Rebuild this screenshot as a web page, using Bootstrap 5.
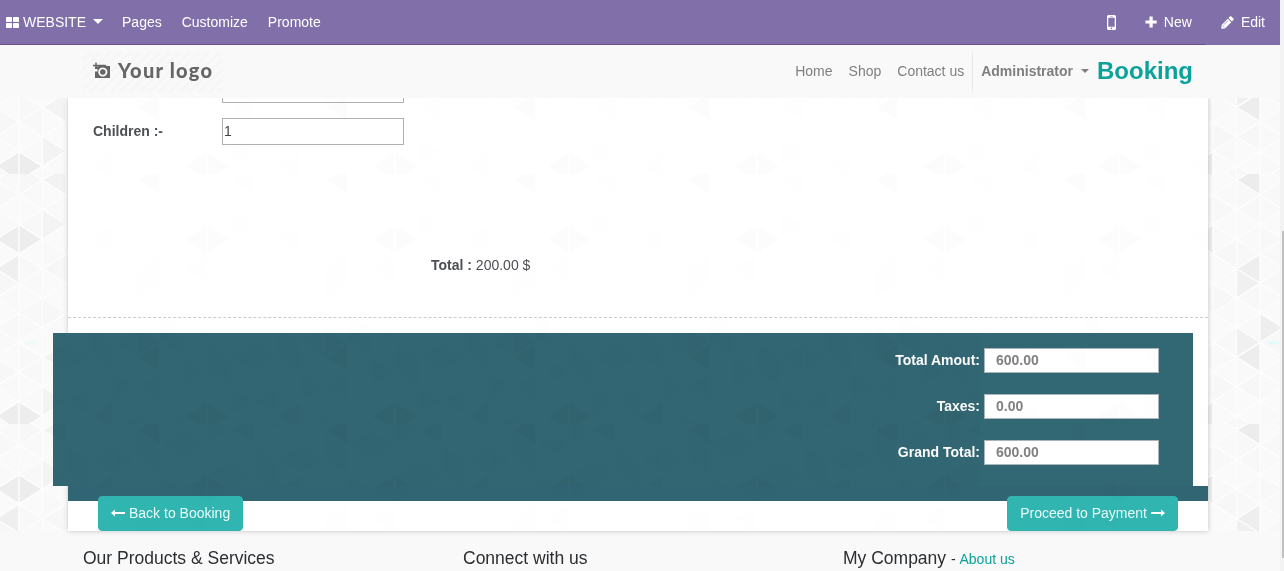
<!DOCTYPE html>
<html lang="en">
<head>
<meta charset="utf-8">
<meta name="viewport" content="width=device-width, initial-scale=1">
<title>Booking</title>
<link rel="stylesheet" href="https://cdn.jsdelivr.net/npm/bootstrap@5.3.0/dist/css/bootstrap.min.css">
<style>
html, body { height: 100%; overflow: hidden; }
body { font-family: "Liberation Sans", Arial, sans-serif; font-size: 14px; line-height: 21px; color: #4c4f53; background: #f9f9f9; }
a { text-decoration: none; color: inherit; }
svg { display: block; }
.page { width: 1280px; height: 571px; }
.scroll-track { width: 4px; background: #f3f3f3; padding: 231px 0 0 2px; }
.scroll-thumb { height: 327px; background: #c1c1c1; }
.topbar { height: 45px; background: #806fa9; color: #fff; padding: 0 15px 1px 6px; }
.topline { height: 1px; width: 1206px; margin-top: -1px; background: #665387; position: relative; }
.caret { border: 4px solid transparent; border-top-color: currentColor; border-bottom: 0; }
.topbar .caret { border-width: 5px 5px 0; margin: -2px -1px 0 7px; }
.menu-item { margin-left: 20px; }
.tool-item { margin-left: 29px; }
.tool-item svg { margin-right: 7px; }
.sitebar { height: 53px; background: #f9f9f9; }
.wrap { width: 1140px; margin: 0 auto 0 68px; padding: 0 15px; }
.logo-box { width: 139px; height: 40px; background: repeating-linear-gradient(135deg, #f9f9f9 0 4px, #f6f6f6 4px 7px); }
.site-links { color: #7f7f7f; }
.site-links .plain { margin-right: 16px; }
.brand-title { color: #0ba29b; font-size: 24px; font-weight: 700; line-height: 30px; padding-bottom: 2px; }
.user-menu { border-left: 1px solid #e7e7e7; height: 38px; padding-left: 8px; }
.user-menu .caret { margin: -2px 0 0 8px; }
.backdrop { height: 433px; background-color: #fafafa; background-image: var(--mesh); background-position: 0 0, 0 0, 0 76px; position: relative; }
.sheet { width: 1140px; height: 433px; margin-left: 68px; background: rgba(255,255,255,.95); box-shadow: 0 0 5px rgba(0,0,0,.22); clip-path: inset(0 -20px -6px -20px); }
/* faint mesh showing through the translucent sheet and totals band */
.mesh-veil { position: absolute; inset: 0 72px 0 68px; mix-blend-mode: multiply; opacity: .11; pointer-events: none; background-image: var(--mesh-only); background-position: -68px 76px; }
.mesh-veil.band { inset: 235px 300px 45px 53px; background-position: -53px -159px; opacity: .5; }
.sheet-field { width: 182px; height: 27px; border: 1px solid #b1b1b1; border-radius: 0; background: transparent; padding: 0 1px 2px; color: #444; font-size: 14px; display: block; }
.sheet-field.cut { height: 5px; border-top: 0; margin-left: 154px; }
.f-label { width: 129px; font-weight: 700; }
.total-line { margin: 110px 0 0 363px; height: 21px; }
.rule { border-top: 1px dashed #c9cccc; margin-top: 41px; height: 16px; }
.amounts { width: 1140px; height: 153px; margin-left: -15px; background: #326774; padding: 15px 34px 0 0; color: #fff; gap: 21px; font-weight: 700; }
.amounts input { width: 175px; height: 25px; border: 1px solid #a9b5ba; background: #fff; color: #808080; font-weight: 700; font-size: 14px; padding: 0 11px 2px; margin-left: 4px; display: block; }
.amounts label { line-height: 25px; }
.amounts-foot { height: 15px; background: #316573; }
.actions { margin: -5px 30px 0; position: relative; }
.btn-sea { --bs-btn-color: #e9fbfa; --bs-btn-bg: #30b5b1; --bs-btn-border-color: #30b5b1; --bs-btn-hover-bg: #259c98; --bs-btn-hover-color: #fff; --bs-btn-border-radius: 4px; --bs-btn-font-size: 14px; --bs-btn-line-height: 21px; height: 35px; padding: 6px 12px; gap: 4px; }
.btn-sea svg { margin-top: -1px; }
.foot { height: 40px; padding-top: 16px; }
.foot .row { --bs-gutter-x: 30px; }
.foot h2 { font-size: 17.5px; line-height: 22px; color: #2b2e31; margin: 0; font-weight: 400; }
.foot a, .foot .dash { font-size: 14px; }
.foot a { color: #0ba29b; margin-left: -1px; }
</style>
</head>
<body>
<div class="d-flex">
<div class="page">
  <nav class="topbar d-flex align-items-center">
    <svg width="13" height="11" viewBox="0 0 13 11" fill="#fff"><rect width="6" height="5" rx=".8"/><rect x="7" width="6" height="5" rx=".8"/><rect y="6" width="6" height="5" rx=".8"/><rect x="7" y="6" width="6" height="5" rx=".8"/></svg>
    <a href="#" class="d-flex align-items-center ms-1">WEBSITE<span class="caret"></span></a>
    <a href="#" class="menu-item">Pages</a>
    <a href="#" class="menu-item">Customize</a>
    <a href="#" class="menu-item">Promote</a>
    <a href="#" class="ms-auto" aria-label="Mobile preview"><svg width="9" height="15" viewBox="0 0 9 15"><path fill="#fff" fill-rule="evenodd" d="M1.500 0h6Q9 0 9 1.500v12Q9 15 7.500 15h-6Q0 15 0 13.500v-12Q0 0 1.500 0zM1.300 2.800v8.900h6.400V2.800zM3.200 1v.6h2.600V1zM4.500 12.500a.8.8 0 1 0 .01 0z"/></svg></a>
    <a href="#" class="tool-item d-flex align-items-center"><svg width="12" height="12" viewBox="0 0 12 12" fill="#fff"><path d="M4.500.5h3.200v3.900h4v3.200h-4v3.900H4.500V7.600h-4V4.400h4z"/></svg>New</a>
    <a href="#" class="tool-item d-flex align-items-center"><svg width="13" height="13" viewBox="0 0 13 13"><path fill="#fff" d="M8.900.6Q9.700-.1 10.500.6l1.900 1.900q.7.800 0 1.600L11 5.500 7.500 2zM6.800 2.700l3.500 3.500L4 12.400l-3.700.3L.600 9z"/><path d="M1.800 9.500l1.800 1.800M3 8.600l4-4" stroke="#806fa9" stroke-width=".7"/></svg>Edit</a>
  </nav>
  <div class="topline"></div>
  <header class="sitebar">
    <div class="wrap d-flex align-items-center h-100">
      <a href="#" class="logo-box" aria-label="Your logo">
        <svg width="139" height="40" viewBox="0 0 139 40"><path fill="#666" fill-rule="evenodd" d="M12 14.500h3l1.200-1.800h6.300l1 1.300H27V26H12v-6.500h2.500V17H12zM19.800 15.400a4.600 4.600 0 1 0 .01 0zM19.800 17.200a2.800 2.800 0 1 1-.01 0z"/><path d="M10 13.500h6M13 10.500v6" stroke="#666" stroke-width="1.400"/><text x="35" y="26" textLength="94" lengthAdjust="spacing" font-family="Lato, sans-serif" font-weight="900" font-size="20" fill="#666">Your logo</text></svg>
      </a>
      <div class="site-links d-flex align-items-center ms-auto">
        <a href="#" class="plain">Home</a>
        <a href="#" class="plain">Shop</a>
        <a href="#">Contact us</a>
        <a href="#" class="user-menu d-flex align-items-center ms-2 fw-bold">Administrator<span class="caret"></span></a>
        <a href="#" class="brand-title ms-2">Booking</a>
      </div>
    </div>
  </header>
  <main class="backdrop">
    <section class="sheet">
      <input class="sheet-field cut" aria-label="Adults" readonly>
      <div class="d-flex align-items-center" style="margin:15px 0 0 25px">
        <label class="f-label" for="children">Children :-</label>
        <input id="children" class="sheet-field" value="1">
      </div>
      <div class="total-line"><strong>Total :</strong> 200.00 $</div>
      <div class="rule"></div>
      <div class="amounts d-flex flex-column align-items-end">
        <div class="d-flex"><label for="a1">Total Amout:</label><input id="a1" value="600.00" readonly></div>
        <div class="d-flex"><label for="a2">Taxes:</label><input id="a2" value="0.00" readonly></div>
        <div class="d-flex"><label for="a3">Grand Total:</label><input id="a3" value="600.00" readonly></div>
      </div>
      <div class="amounts-foot"></div>
      <div class="actions d-flex justify-content-between">
        <a href="#" class="btn btn-sea d-flex align-items-center"><svg width="14" height="8" viewBox="0 0 14 8"><path fill="#fff" d="M0 4L4 .5V3h10v2H4v2.500z"/></svg>Back to Booking</a>
        <a href="#" class="btn btn-sea d-flex align-items-center">Proceed to Payment<svg width="14" height="8" viewBox="0 0 14 8"><path fill="#fff" d="M14 4L10 .5V3H0v2h10v2.500z"/></svg></a>
      </div>
    </section>
    <div class="mesh-veil"></div>
    <div class="mesh-veil band"></div>
  </main>
  <footer class="foot">
    <div class="wrap">
      <div class="row">
        <div class="col-4"><h2>Our Products &amp; Services</h2></div>
        <div class="col-4"><h2>Connect with us</h2></div>
        <div class="col-4"><h2>My Company <span class="dash">-</span> <a href="#">About us</a></h2></div>
      </div>
    </div>
  </footer>
</div>
<div class="scroll-track"><div class="scroll-thumb"></div></div>
</div>
<script src="https://cdn.jsdelivr.net/npm/bootstrap@5.3.0/dist/js/bootstrap.bundle.min.js"></script>
<script>
// Triangle mesh wallpaper: a 188px motif repeated inside a 550x250 tile.
(function () {
  var W = 23.5, H = 29.5, out = '';
  // Accented triangles: column, centre y, direction (r = points right), grey level
  var accents = [
    [-1, 65, 'l', 237], [0, 65, 'r', 237], [-1, 242, 'l', 237], [0, 242, 'r', 237], [-1, 94, 'l', 239],
    [1, 49, 'r', 243], [1, 226, 'r', 243], [1, 6, 'l', 242], [1, 183, 'l', 243],
    [3, 65, 'l', 238], [3, 242, 'l', 238], [5, 6, 'l', 236], [5, 183, 'l', 237],
    [5, 94, 'l', 238], [5, 109, 'r', 240], [5, 168, 'r', 240], [6, 153, 'r', 238]
  ];
  function shade(c, y, d) {
    for (var i = 0; i < accents.length; i++) {
      var a = accents[i];
      if ((a[0] + 8) % 8 === (c + 8) % 8 && a[2] === d && Math.abs(a[1] - y) < 5) return a[3];
    }
    return 247 + Math.abs(Math.round(Math.sin(((c + 8) % 8) * 12.9 + Math.round(y / 14.75) * 7.3 + (d === 'l' ? 3 : 0)) * 3));
  }
  function tri(p, g) {
    out += '<path d="M' + p + 'z" fill="rgb(' + g + ',' + g + ',' + g + ')"/>';
  }
  for (var c = -1; c < 24; c++) {
    var x = 19 + c * W, odd = Math.abs(c % 2), k = c % 8;
    for (var j = -2; j < 10; j++) {
      var top = (odd ? 6 : 21.2) + j * H, mid = top + H / 2;
      tri([x, top, x, top + H, x + W, mid].join(' '), shade(k, mid, 'r'));
      var rt = (odd ? 21.2 : 6) + j * H, rm = rt + H / 2;
      tri([x + W, rt, x + W, rt + H, x, rm].join(' '), shade(k, rm, 'l'));
    }
  }
  function sheetOf(line) {
    return 'url("data:image/svg+xml,' + encodeURIComponent('<svg xmlns="http://www.w3.org/2000/svg" width="550" height="250"><g stroke="' + line + '" stroke-width="1.3">' + out + '</g></svg>') + '")';
  }
  var root = document.documentElement.style;
  root.setProperty('--mesh-only', sheetOf('#fbfbfb'));
  root.setProperty('--mesh', 'radial-gradient(9px 3px at 31px 245px, #e4fdfd, transparent), radial-gradient(9px 2px at 1274px 245px, #d4fdfd, transparent), ' + sheetOf('#fdfdfd'));
})();
</script>
</body>
</html>
